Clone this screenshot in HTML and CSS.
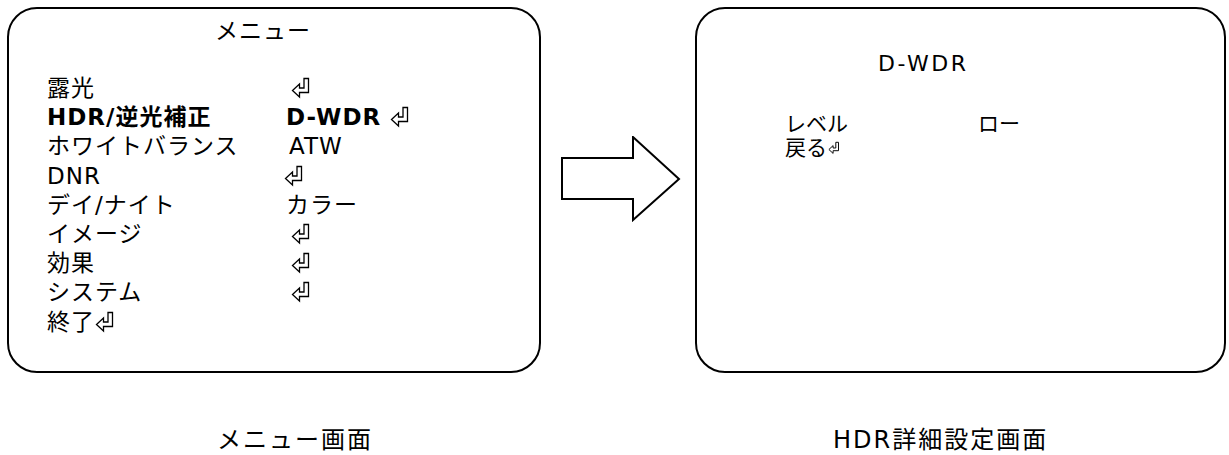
FILE: index.html
```html
<!DOCTYPE html>
<html lang="ja">
<head>
    <meta charset="UTF-8">
    <meta name="viewport" content="width=device-width, initial-scale=1.0">
    <title>メニュー画面 / HDR詳細設定画面</title>
    <link rel="stylesheet" href="styles.css">
</head>
<body>
    <div class="screens">
        <!-- メニュー画面 -->
        <div class="panel menu">
            <div class="menu-title">メニュー</div>
            <div class="menu-list">
                <span>露光</span><span><svg class="enter" viewBox="0 0 20 22"><path d="M13 1.5H17.5V15.5H8.5V20L1.5 13.5L8.5 7V11H13Z"/></svg></span>
                <span class="bold">HDR/逆光補正</span><span class="bold value">D-WDR <svg class="enter" viewBox="0 0 20 22"><path d="M13 1.5H17.5V15.5H8.5V20L1.5 13.5L8.5 7V11H13Z"/></svg></span>
                <span>ホワイトバランス</span><span class="value atw">ATW</span>
                <span>DNR</span><span><svg class="enter dnr" viewBox="0 0 20 22"><path d="M13 1.5H17.5V15.5H8.5V20L1.5 13.5L8.5 7V11H13Z"/></svg></span>
                <span>デイ/ナイト</span><span class="value">カラー</span>
                <span>イメージ</span><span><svg class="enter" viewBox="0 0 20 22"><path d="M13 1.5H17.5V15.5H8.5V20L1.5 13.5L8.5 7V11H13Z"/></svg></span>
                <span>効果</span><span><svg class="enter" viewBox="0 0 20 22"><path d="M13 1.5H17.5V15.5H8.5V20L1.5 13.5L8.5 7V11H13Z"/></svg></span>
                <span>システム</span><span><svg class="enter" viewBox="0 0 20 22"><path d="M13 1.5H17.5V15.5H8.5V20L1.5 13.5L8.5 7V11H13Z"/></svg></span>
                <span>終了<svg class="enter tight" viewBox="0 0 20 22"><path d="M13 1.5H17.5V15.5H8.5V20L1.5 13.5L8.5 7V11H13Z"/></svg></span><span></span>
            </div>
        </div>

        <!-- 矢印 -->
        <div class="link">
            <svg class="big-arrow" viewBox="0 0 120 86">
                <path d="M1 22H72V1L118 43L72 84V63H1Z"/>
            </svg>
        </div>

        <!-- HDR詳細設定画面 -->
        <div class="panel detail">
            <div class="detail-title">D-WDR</div>
            <div class="detail-list">
                <span>レベル</span><span>ロー</span>
                <span>戻る<svg class="enter small" viewBox="0 0 20 22"><path d="M13 1.5H17.5V15.5H8.5V20L1.5 13.5L8.5 7V11H13Z"/></svg></span><span></span>
            </div>
        </div>
    </div>

    <div class="captions">
        <p class="caption left">メニュー画面</p>
        <p class="caption right">HDR詳細設定画面</p>
    </div>
</body>
</html>
```

FILE: styles.css
```css
body {
    margin: 0;
    padding: 0;
    background-color: #ffffff;
    color: #000000;
    font-family: "DejaVu Sans", "Noto Sans CJK JP", sans-serif;
}
.screens {
    display: flex;
    padding: 7px 0 0 7px;
}
.panel {
    box-sizing: border-box;
    height: 366px;
    border: 2px solid #000;
    border-radius: 30px;
}
.menu {
    width: 534px;
    font-size: 23px;
    letter-spacing: 1px;
}
.menu-title {
    text-align: center;
    line-height: 29px;
    margin-top: 8px;
    padding-right: 22px;
}
.menu-list {
    display: grid;
    grid-template-columns: 236px 1fr;
    line-height: 29.2px;
    margin-top: 28px;
    padding-left: 38px;
}
.bold {
    font-weight: bold;
}
.value {
    padding-left: 3px;
}
.atw {
    padding-left: 6px;
}
.enter {
    width: 20px;
    height: 22px;
    margin-left: 8px;
    vertical-align: -3px;
    fill: none;
    stroke: #000;
    stroke-width: 1.3;
    stroke-linejoin: miter;
}
.value .enter {
    margin-left: 0;
}
.enter.dnr {
    margin-left: 1px;
}
.enter.tight {
    margin-left: 0;
}
.enter.small {
    width: 12px;
    height: 14px;
    margin-left: 1px;
    vertical-align: 0;
    stroke-width: 1.6;
}
.link {
    width: 154px;
}
.big-arrow {
    display: block;
    width: 120px;
    height: 86px;
    margin: 129px 0 0 20px;
    fill: #fff;
    stroke: #000;
    stroke-width: 2;
}
.detail {
    width: 531px;
    font-size: 21px;
}
.detail-title {
    font-size: 22px;
    letter-spacing: 2.5px;
    line-height: 26px;
    margin-top: 42px;
    padding-left: 181px;
}
.detail-list {
    display: grid;
    grid-template-columns: 193px 1fr;
    line-height: 24px;
    margin-top: 35px;
    padding-left: 88px;
}
.captions {
    display: flex;
    padding-left: 7px;
}
.caption {
    margin: 52px 0 0 0;
    font-size: 24px;
    letter-spacing: 2px;
    line-height: 30px;
}
.caption.left {
    width: 688px;
    padding-left: 210px;
    box-sizing: border-box;
}
.caption.right {
    padding-left: 138px;
}
```
